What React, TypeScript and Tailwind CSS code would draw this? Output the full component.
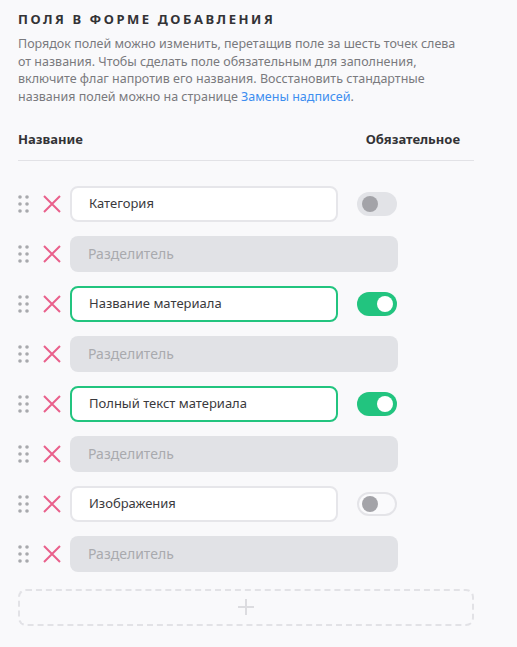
import React from "react";

type Row = { kind: "field"; label: string; on: boolean; hovered?: boolean } | { kind: "sep" };

const rows: Row[] = [
  { kind: "field", label: "Категория", on: false },
  { kind: "sep" },
  { kind: "field", label: "Название материала", on: true },
  { kind: "sep" },
  { kind: "field", label: "Полный текст материала", on: true },
  { kind: "sep" },
  { kind: "field", label: "Изображения", on: false, hovered: true },
  { kind: "sep" },
];

function Dots() {
  return (
    <svg width="12" height="18" viewBox="0 0 12 18" className="shrink-0">
      {[2, 9, 16].map((y) =>
        [2, 9].map((x) => <circle key={`${x}-${y}`} cx={x} cy={y} r="1.8" fill="#a8a9ad" />)
      )}
    </svg>
  );
}

function Cross() {
  return (
    <svg width="20" height="20" viewBox="0 0 20 20" className="shrink-0">
      <path d="M2 2 L18 18 M18 2 L2 18" stroke="#e9608b" strokeWidth="2" strokeLinecap="butt" />
    </svg>
  );
}

function Toggle({ on, hovered }: { on: boolean; hovered?: boolean }) {
  if (on) {
    return (
      <div className="w-[40px] h-[24px] rounded-full bg-[#22c47f] flex items-center justify-end pr-[4px] shrink-0">
        <div className="w-[16px] h-[16px] rounded-full bg-white" />
      </div>
    );
  }
  return (
    <div
      className={
        hovered
          ? "w-[40px] h-[24px] rounded-full bg-[#fafafc] border-2 border-[#e4e4e8] flex items-center pl-[3px] shrink-0"
          : "w-[40px] h-[24px] rounded-full bg-[#e2e3e7] flex items-center pl-[5px] shrink-0"
      }
    >
      <div className="w-[16px] h-[16px] rounded-full bg-[#a3a3a8]" />
    </div>
  );
}

export default function App() {
  return (
    <div
      className="min-h-[647px] w-[517px] bg-[#f9f9fb] pl-[18px] pt-[10px]"
      style={{ fontFamily: '"Noto Sans", "Open Sans", sans-serif' }}
    >
      <div className="w-[456px]">
        <h2 className="text-[13px] font-bold tracking-[2.55px] text-[#333336] leading-[18px]">
          ПОЛЯ В ФОРМЕ ДОБАВЛЕНИЯ
        </h2>
        <p className="mt-[7px] text-[12.5px] leading-[17.7px] text-[#7a7a7e] pr-[4px]">
          Порядок полей можно изменить, перетащив поле за шесть точек слева от названия. Чтобы сделать поле
          обязательным для заполнения, включите флаг напротив его названия. Восстановить стандартные названия полей
          можно на странице <a className="text-[#3d8ef0]">Замены надписей</a>.
        </p>
        <div className="mt-[24px] flex justify-between items-center text-[13px] font-bold text-[#333336] leading-[18px] pr-[14px] pb-[12px] border-b border-[#e2e2e6]">
          <span>Название</span>
          <span>Обязательное</span>
        </div>
        <div className="mt-[25px] flex flex-col gap-[14px]">
          {rows.map((r, i) => (
            <div key={i} className="flex items-center h-[36px]">
              <div className="w-[24px] flex items-center">
                <Dots />
              </div>
              <div className="w-[28px] flex items-center">
                <Cross />
              </div>
              {r.kind === "field" ? (
                <>
                  <div
                    className={
                      r.on
                        ? "w-[268px] h-[36px] rounded-[8px] bg-white border-2 border-[#22c47f] flex items-center pl-[17px] text-[13px] text-[#3a3a3d]"
                        : "w-[268px] h-[36px] rounded-[8px] bg-white border-2 border-[#e6e6ea] flex items-center pl-[17px] text-[13px] text-[#3a3a3d]"
                    }
                  >
                    {r.label}
                  </div>
                  <div className="ml-[19px]">
                    <Toggle on={r.on} hovered={r.hovered} />
                  </div>
                </>
              ) : (
                <div className="w-[328px] h-[36px] rounded-[8px] bg-[#e1e2e6] flex items-center pl-[18px] text-[14px] text-[#a9aaae]">
                  Разделитель
                </div>
              )}
            </div>
          ))}
        </div>
        <div className="mt-[17px] h-[37px] rounded-[8px] border-2 border-dashed border-[#e2e2e6] flex items-center justify-center">
          <svg width="18" height="18" viewBox="0 0 18 18">
            <path d="M9 1 V17 M1 9 H17" stroke="#dcdce0" strokeWidth="2" />
          </svg>
        </div>
      </div>
    </div>
  );
}
